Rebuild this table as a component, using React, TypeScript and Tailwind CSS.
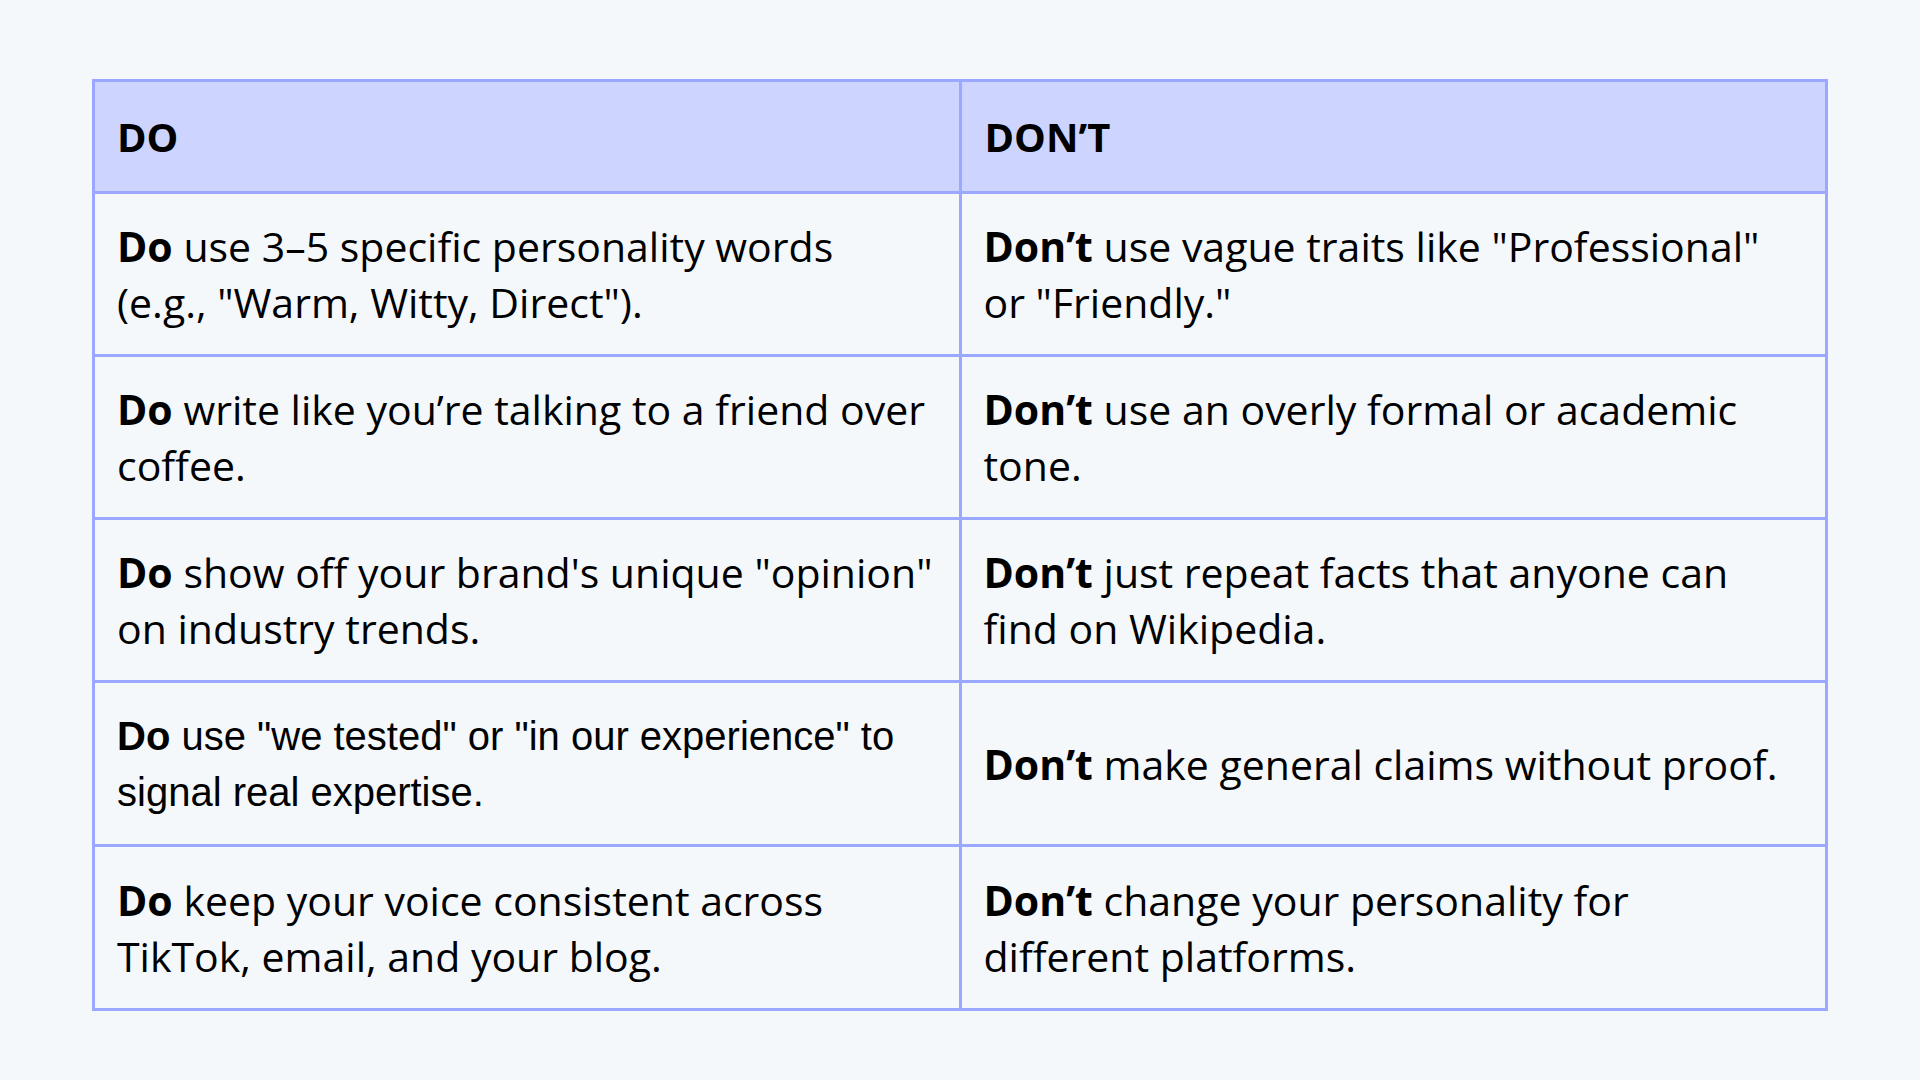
const rows: { doText: string[]; dontText: string[]; arial?: boolean; h: string }[] = [
  {
    doText: ['use 3–5 specific personality words', '(e.g., "Warm, Witty, Direct").'],
    dontText: ['use vague traits like "Professional"', 'or "Friendly."'],
    h: "h-[160px]",
  },
  {
    doText: ["write like you’re talking to a friend over", "coffee."],
    dontText: ["use an overly formal or academic", "tone."],
    h: "h-[160px]",
  },
  {
    doText: ['show off your brand\'s unique "opinion"', "on industry trends."],
    dontText: ["just repeat facts that anyone can", "find on Wikipedia."],
    h: "h-[160px]",
  },
  {
    doText: ['use "we tested" or "in our experience" to', "signal real expertise."],
    dontText: ["make general claims without proof."],
    arial: true,
    h: "h-[161px]",
  },
  {
    doText: ["keep your voice consistent across", "TikTok, email, and your blog."],
    dontText: ["change your personality for", "different platforms."],
    h: "h-[161px]",
  },
];

function Cell({ bold, lines, arial, h }: { bold: string; lines: string[]; arial?: boolean; h: string }) {
  return (
    <div className={`bg-[#f4f8fb] ${h} flex items-center pl-[22px] pr-4`}>
      <p
        className={`leading-[56px] text-black ${
          arial
            ? "text-[40px] font-['Liberation_Sans',Arial,sans-serif]"
            : "text-[41px] font-['Open_Sans',sans-serif]"
        }`}
      >
        {lines.map((line, i) => (
          <span key={i} className="block whitespace-nowrap">
            {i === 0 && <span className="font-bold">{bold} </span>}
            {line}
          </span>
        ))}
      </p>
    </div>
  );
}

export default function App() {
  return (
    <div className="w-[1920px] h-[1080px] bg-[#f4f8fb] pt-[79px] pl-[92px]">
      <div className="w-[1736px] grid grid-cols-2 gap-[3px] p-[3px] bg-[#9aa9ff]">
        <div className="bg-[#cdd5ff] h-[109px] flex items-center pl-[22px]">
          <span className="text-[40px] font-bold text-black font-['Open_Sans',sans-serif]">DO</span>
        </div>
        <div className="bg-[#cdd5ff] h-[109px] flex items-center pl-[23px]">
          <span className="text-[40px] font-bold text-black font-['Open_Sans',sans-serif]">DON’T</span>
        </div>
        {rows.map((r, i) => (
          <div key={i} className="contents">
            <Cell bold="Do" lines={r.doText} arial={r.arial} h={r.h} />
            <Cell bold="Don’t" lines={r.dontText} h={r.h} />
          </div>
        ))}
      </div>
    </div>
  );
}
